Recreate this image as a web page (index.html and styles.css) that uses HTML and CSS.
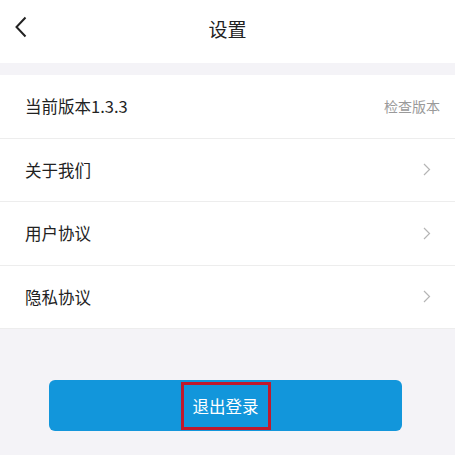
FILE: index.html
```html
<!DOCTYPE html>
<html lang="zh">
<head>
<meta charset="utf-8">
<title>设置</title>
<link rel="stylesheet" href="styles.css">
</head>
<body>
<div class="page">
  <header class="nav">
    <span class="back">
      <svg width="14" height="22" viewBox="0 0 14 22"><path d="M11.5 1.5 L2.5 11 L11.5 20.5" fill="none" stroke="#222" stroke-width="2"/></svg>
    </span>
    <h1 class="title">设置</h1>
  </header>
  <div class="gap"></div>
  <ul class="list">
    <li class="row"><span class="label">当前版本1.3.3</span><span class="hint">检查版本</span></li>
    <li class="row"><span class="label">关于我们</span><span class="arrow"><svg width="8" height="13" viewBox="0 0 8 13"><path d="M1 1 L6.5 6.5 L1 12" fill="none" stroke="#b5b5b5" stroke-width="1.2"/></svg></span></li>
    <li class="row"><span class="label">用户协议</span><span class="arrow"><svg width="8" height="13" viewBox="0 0 8 13"><path d="M1 1 L6.5 6.5 L1 12" fill="none" stroke="#b5b5b5" stroke-width="1.2"/></svg></span></li>
    <li class="row"><span class="label">隐私协议</span><span class="arrow"><svg width="8" height="13" viewBox="0 0 8 13"><path d="M1 1 L6.5 6.5 L1 12" fill="none" stroke="#b5b5b5" stroke-width="1.2"/></svg></span></li>
  </ul>
  <div class="actions">
    <button class="logout"><span class="logout-text">退出登录</span></button>
  </div>
</div>
</body>
</html>
```

FILE: styles.css
```css
* { box-sizing: border-box; }
html, body { margin: 0; padding: 0; }
body {
  background: #f4f3f7;
  font-family: "Noto Sans CJK SC", "Noto Sans", "Liberation Sans", sans-serif;
  color: #222;
}
.page { width: 455px; min-height: 455px; }
.nav {
  height: 63px;
  background: #fff;
  display: flex;
  align-items: center;
  justify-content: center;
  position: relative;
  padding-bottom: 6px;
}
.back {
  position: absolute;
  left: 14px;
  top: 16px;
  display: flex;
}
.title {
  margin: 0;
  font-size: 19px;
  font-weight: 400;
  color: #222;
  line-height: 1;
}
.gap { height: 12px; }
.list {
  list-style: none;
  margin: 0;
  padding: 0;
  background: #fff;
}
.row {
  height: 63.5px;
  border-bottom: 1px solid #ededed;
  display: flex;
  align-items: center;
  justify-content: space-between;
  padding: 0 15px 0 25px;
}
.label { font-size: 16.5px; color: #222; }
.hint { font-size: 14px; color: #9a9a9a; }
.arrow { display: flex; padding-right: 9px; }
.actions {
  padding: 51px 0 0 49px;
}
.logout {
  width: 353px;
  height: 51px;
  border: none;
  border-radius: 6px;
  background: #1296db;
  display: flex;
  align-items: center;
  justify-content: center;
  padding: 0;
  font-family: inherit;
}
.logout-text {
  display: flex;
  align-items: center;
  height: 48px;
  padding: 0 9px;
  border: 3px solid #c0192c;
  color: #fff;
  font-size: 16.5px;
}
```
